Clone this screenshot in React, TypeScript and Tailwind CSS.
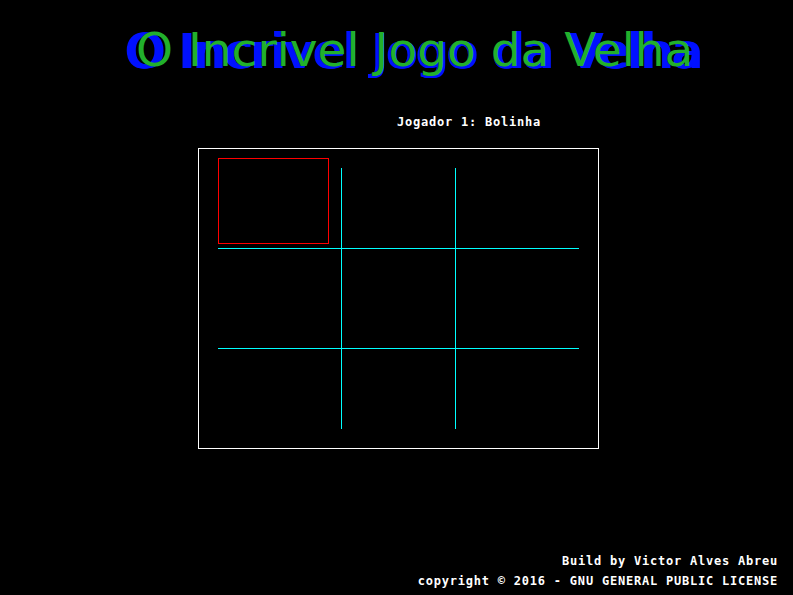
import React from "react";

export default function App() {
  const mono = "font-['DejaVu_Sans_Mono',monospace] font-bold text-[12px] tracking-[0.78px] leading-[20px] text-white whitespace-nowrap";
  return (
    <div className="w-[793px] h-[595px] bg-black flex flex-col overflow-hidden">
      <div className="grid h-[112px] font-['DejaVu_Sans',sans-serif]">
        <span className="col-start-1 row-start-1 self-start mt-[27px] ml-[124px] text-[48.6px] leading-none whitespace-nowrap text-[#0011ff] [text-shadow:1px_0_#0011ff,2px_0_#0011ff,3px_0_#0011ff,4px_0_#0011ff]">
          O Incrivel Jogo da Velha
        </span>
        <span className="col-start-1 row-start-1 self-start mt-[26px] ml-[136px] text-[47px] leading-none whitespace-nowrap text-[#22b02c]">
          O Incrivel Jogo da Velha
        </span>
      </div>
      <div className={`pl-[397px] h-[20px] ${mono}`}>Jogador 1: Bolinha</div>
      <div className="mt-[16px] ml-[198px] w-[401px] h-[301px] border border-white">
        <svg width="399" height="299" viewBox="0 0 399 299" shapeRendering="crispEdges">
          <rect x="19.5" y="9.5" width="110" height="85" fill="none" stroke="#ff0000" strokeWidth="1" />
          <line x1="19" y1="99.5" x2="380" y2="99.5" stroke="#00ffff" strokeWidth="1" />
          <line x1="19" y1="199.5" x2="380" y2="199.5" stroke="#00ffff" strokeWidth="1" />
          <line x1="142.5" y1="19" x2="142.5" y2="280" stroke="#00ffff" strokeWidth="1" />
          <line x1="256.5" y1="19" x2="256.5" y2="280" stroke="#00ffff" strokeWidth="1" />
        </svg>
      </div>
      <div className={`mt-auto pb-[4px] pr-[15px] text-right ${mono}`}>
        <div>Build by Victor Alves Abreu</div>
        <div>copyright © 2016 - GNU GENERAL PUBLIC LICENSE</div>
      </div>
    </div>
  );
}
